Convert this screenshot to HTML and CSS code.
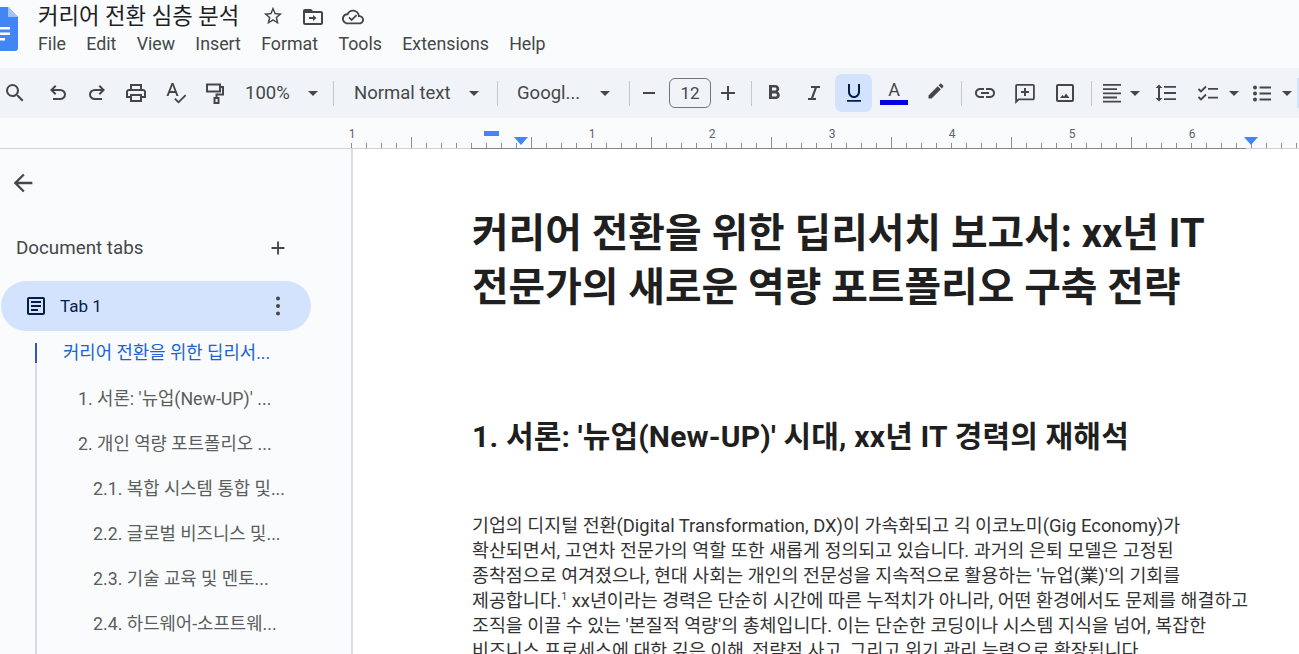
FILE: index.html
```html
<!DOCTYPE html>
<html lang="ko">
<head>
<meta charset="utf-8">
<title>커리어 전환 심층 분석</title>
<link rel="stylesheet" href="styles.css">
</head>
<body>
<header class="top">
  <svg class="logo" viewBox="0 0 32 44"><path fill="#4285f4" d="M3 0h19l10 10v31a3 3 0 0 1-3 3H3a3 3 0 0 1-3-3V3a3 3 0 0 1 3-3z"/><path fill="#a1c2fa" d="M22 0l10 10H22z"/><path fill="#fff" d="M8 20h16v2.400H8zM8 25.500h16v2.400H8zM8 31h11v2.400H8z"/></svg>
  <div class="top-main">
    <div class="title-row">
      <span class="doc-title">커리어 전환 심층 분석</span>
      <svg class="ti ti-star" viewBox="0 0 24 24"><path d="M22 9.240l-7.190-.62L12 2 9.190 8.630 2 9.240l5.460 4.730L5.820 21 12 17.270 18.180 21l-1.630-7.030L22 9.240zM12 15.400l-3.760 2.270 1-4.280-3.320-2.880 4.380-.38L12 6.100l1.710 4.040 4.380.38-3.320 2.880 1 4.280L12 15.400z"/></svg>
      <svg class="ti ti-folder" viewBox="0 0 24 24"><path d="M20 6h-8l-2-2H4c-1.100 0-2 .9-2 2v12c0 1.100.9 2 2 2h16c1.100 0 2-.9 2-2V8c0-1.100-.9-2-2-2zm0 12H4V8h16v10zM12 10l3.500 3-3.500 3v-2H8v-2h4z"/></svg>
      <svg class="ti ti-cloud" viewBox="0 0 24 24"><path d="M19.350 10.040C18.670 6.590 15.640 4 12 4 9.110 4 6.600 5.640 5.350 8.040 2.340 8.360 0 10.910 0 14c0 3.310 2.690 6 6 6h13c2.760 0 5-2.240 5-5 0-2.640-2.050-4.780-4.650-4.960zM19 18H6c-2.210 0-4-1.790-4-4s1.790-4 4-4h.71C7.370 7.690 9.480 6 12 6c3.040 0 5.500 2.460 5.500 5.500v.5H19c1.660 0 3 1.340 3 3s-1.340 3-3 3z"/><path d="M10.500 16.500L7 13l1.300-1.300 2.200 2.200 4.700-4.700 1.300 1.300z"/></svg>
    </div>
    <nav class="menu"><span>File</span><span>Edit</span><span>View</span><span>Insert</span><span>Format</span><span>Tools</span><span>Extensions</span><span>Help</span></nav>
  </div>
</header>

<div class="toolbar">
  <svg class="ic i-search" viewBox="0 0 24 24"><path d="M15.500 14h-.79l-.28-.27A6.471 6.471 0 0 0 16 9.500 6.500 6.500 0 1 0 9.500 16c1.610 0 3.090-.59 4.230-1.570l.27.28v.79l5 4.990L20.490 19l-4.990-5zm-6 0C7.010 14 5 11.990 5 9.500S7.010 5 9.500 5 14 7.010 14 9.500 11.990 14 9.500 14z"/></svg>
  <svg class="ic i-undo" viewBox="0 0 24 24"><path d="M7 19v-2h7.100q1.575 0 2.738-1T18 13.500 16.837 11 14.100 10H7.800l2.600 2.600L9 14 4 9l5-5 1.400 1.400L7.800 8h6.300q2.425 0 4.163 1.575T20 13.500t-1.737 3.925T14.100 19H7z"/></svg>
  <svg class="ic i-redo" viewBox="0 0 24 24"><path d="M17 19v-2H9.900q-1.575 0-2.738-1T6 13.500 7.163 11 9.900 10h6.300l-2.600 2.600L15 14l5-5-5-5-1.400 1.400L16.200 8H9.900q-2.425 0-4.163 1.575T4 13.500t1.737 3.925T9.900 19H17z"/></svg>
  <svg class="ic i-print" viewBox="0 0 24 24"><path d="M19 8h-1V3H6v5H5c-1.660 0-3 1.340-3 3v6h4v4h12v-4h4v-6c0-1.660-1.340-3-3-3zM8 5h8v3H8V5zm8 12v2H8v-4h8v2zm2-2v-2H6v2H4v-4c0-.55.45-1 1-1h14c.55 0 1 .45 1 1v4h-2z"/></svg>
  <svg class="ic i-spell" viewBox="0 0 24 24"><path d="M12.450 15h2.090L9.430 2H7.570L2.460 15h2.090l1.120-3h5.640l1.140 3zm-6.020-5L8.500 4.480 10.570 10H6.430zM21 13.500l-6.500 6.500-3-3-1.300 1.300 4.300 4.300 7.800-7.800z"/></svg>
  <svg class="ic i-paint" viewBox="0 0 24 24"><path fill="none" stroke="currentColor" stroke-width="2" d="M5 3.500h13v7H5zM18 6h3v7.500h-6.500V17M12.500 17h4v5h-4z"/></svg>
  <span class="tb-text t-zoom">100%</span><i class="caret c-zoom"></i>
  <i class="sep s1"></i>
  <span class="tb-text t-style">Normal text</span><i class="caret c-style"></i>
  <i class="sep s2"></i>
  <span class="tb-text t-font">Googl...</span><i class="caret c-font"></i>
  <i class="sep s3"></i>
  <svg class="ic i-minus" viewBox="0 0 24 24"><path d="M6 11h12v2H6z"/></svg>
  <span class="size-box">12</span>
  <svg class="ic i-plus" viewBox="0 0 24 24"><path d="M19 13h-6v6h-2v-6H5v-2h6V5h2v6h6z"/></svg>
  <i class="sep s4"></i>
  <svg class="ic i-bold" viewBox="0 0 24 24"><path d="M15.600 10.790c.97-.67 1.650-1.770 1.650-2.790 0-2.260-1.750-4-4-4H7v14h7.040c2.090 0 3.710-1.700 3.710-3.790 0-1.520-.86-2.820-2.150-3.420zM10 6.500h3c.83 0 1.500.67 1.500 1.500s-.67 1.500-1.500 1.500h-3v-3zm3.500 9H10v-3h3.500c.83 0 1.500.67 1.500 1.500s-.67 1.500-1.500 1.500z"/></svg>
  <svg class="ic i-italic" viewBox="0 0 24 24"><path d="M9 5v2h3.600L8.900 17H6v2h8v-2h-2.800l3.700-10H18V5z"/></svg>
  <span class="u-btn"><svg class="ic" viewBox="0 0 24 24"><path d="M12 17c3.310 0 6-2.690 6-6V3h-2v8c0 2.200-1.800 4-4 4s-4-1.800-4-4V3H6v8c0 3.310 2.690 6 6 6zm-7 2v1.800h14V19H5z"/></svg></span>
  <span class="color-btn"><span class="color-a">A</span><i class="color-bar"></i></span>
  <svg class="i-pen" viewBox="0 0 24 24"><path d="M3 17.250V21h3.750L17.810 9.940l-3.750-3.750L3 17.250zM20.710 7.040a.996.996 0 0 0 0-1.410l-2.340-2.340a.996.996 0 0 0-1.410 0l-1.830 1.830 3.750 3.750 1.830-1.830z"/></svg>
  <i class="sep s5"></i>
  <svg class="ic i-link" viewBox="0 0 24 24"><path d="M3.900 12c0-1.710 1.390-3.100 3.100-3.100h4V7H7c-2.760 0-5 2.240-5 5s2.240 5 5 5h4v-1.900H7c-1.710 0-3.100-1.390-3.100-3.100zM8 13h8v-2H8v2zm9-6h-4v1.900h4c1.710 0 3.100 1.390 3.100 3.100s-1.390 3.100-3.100 3.100h-4V17h4c2.760 0 5-2.240 5-5s-2.240-5-5-5z"/></svg>
  <svg class="ic i-comment" viewBox="0 0 24 24"><path d="M20 3H4c-1 0-1.800.8-1.800 1.800V23l3.800-3.800h14c1 0 1.800-.8 1.800-1.800V4.800C21.800 3.800 21 3 20 3zm0 14.400H5.200L4 18.600V4.800h16v12.600zM11 7h2v3h3v2h-3v3h-2v-3H8v-2h3z"/></svg>
  <svg class="ic i-image" viewBox="0 0 24 24"><path d="M5 3h14a2 2 0 0 1 2 2v14a2 2 0 0 1-2 2H5a2 2 0 0 1-2-2V5a2 2 0 0 1 2-2zm0 2v14h14V5H5zm2 12l2.500-3 1.500 1.500 2-3 3.500 4.500z"/></svg>
  <i class="sep s6"></i>
  <svg class="ic i-align" viewBox="0 0 24 24"><path d="M3 3h18v1.800H3zM3 7.200h14V9H3zM3 11.400h18v1.800H3zM3 15.600h14v1.800H3zM3 19.800h18v1.800H3z"/></svg><i class="caret c-align"></i>
  <svg class="ic i-line" viewBox="0 0 24 24"><path d="M6 7h2.500L5 3.500 1.500 7H4v10H1.500L5 20.500 8.500 17H6V7zm4-2v1.800h12V5H10zm0 14h12v-1.800H10V19zm0-6.100h12v-1.800H10v1.800z"/></svg>
  <svg class="ic i-check" viewBox="0 0 24 24"><path fill="none" stroke="currentColor" stroke-width="1.800" d="M2.500 8l2.500 2.500L10 5.500M2.500 16l2.500 2.500 5-5"/><path d="M12 7h10v1.800H12zM12 15.800h10v1.800H12z"/></svg><i class="caret c-check"></i>
  <svg class="ic i-list" viewBox="0 0 24 24"><circle cx="5" cy="6.500" r="2"/><circle cx="5" cy="12.500" r="2"/><circle cx="5" cy="18.500" r="2"/><path d="M9.500 5.600H21v1.800H9.500zM9.500 11.600H21v1.800H9.500zM9.500 17.600H21v1.800H9.500z"/></svg><i class="caret c-list"></i>
  <i class="edge"></i>
</div>

<div class="ruler">
  <div class="ruler-nums"><span>1</span><span></span><span>1</span><span>2</span><span>3</span><span>4</span><span>5</span><span>6</span></div>
  <i class="indent-bar"></i>
  <i class="tri tri-l"></i>
  <i class="tri tri-r"></i>
</div>

<div class="main">
  <aside class="side">
    <svg class="back" viewBox="0 0 24 24"><path d="M20 11H7.830l5.590-5.590L12 4l-8 8 8 8 1.410-1.410L7.830 13H20v-2z"/></svg>
    <div class="tabs-head"><span>Document tabs</span><svg class="add" viewBox="0 0 24 24"><path d="M19 13h-6v6h-2v-6H5v-2h6V5h2v6h6z"/></svg></div>
    <div class="tab-pill">
      <svg class="ic tab-ic" viewBox="0 0 24 24"><path d="M19 3H5c-1.100 0-2 .9-2 2v14c0 1.100.9 2 2 2h14c1.100 0 2-.9 2-2V5c0-1.100-.9-2-2-2zm0 16H5V5h14v14zM7 7h10v2H7zM7 11h10v2H7zM7 15h7v2H7z"/></svg>
      <span class="tab-name">Tab 1</span>
      <svg class="ic tab-more" viewBox="0 0 24 24"><circle cx="12" cy="4.500" r="2"/><circle cx="12" cy="12" r="2"/><circle cx="12" cy="19.500" r="2"/></svg>
    </div>
    <ul class="outline">
      <li class="active l0">커리어 전환을 위한 딥리서...</li>
      <li class="l1">1. 서론: '뉴업(New-UP)' ...</li>
      <li class="l1">2. 개인 역량 포트폴리오 ...</li>
      <li class="l2">2.1. 복합 시스템 통합 및...</li>
      <li class="l2">2.2. 글로벌 비즈니스 및...</li>
      <li class="l2">2.3. 기술 교육 및 멘토...</li>
      <li class="l2">2.4. 하드웨어-소프트웨...</li>
    </ul>
  </aside>
  <main class="doc">
    <h1>커리어 전환을 위한 딥리서치 보고서: xx년 IT<br>전문가의 새로운 역량 포트폴리오 구축 전략</h1>
    <h2>1. 서론: '뉴업(New-UP)' 시대, xx년 IT 경력의 재해석</h2>
    <p>기업의 디지털 전환(Digital Transformation, DX)이 가속화되고 긱 이코노미(Gig Economy)가<br>확산되면서, 고연차 전문가의 역할 또한 새롭게 정의되고 있습니다. 과거의 은퇴 모델은 고정된<br>종착점으로 여겨졌으나, 현대 사회는 개인의 전문성을 지속적으로 활용하는 '뉴업(業)'의 기회를<br>제공합니다.<sup>1</sup> xx년이라는 경력은 단순히 시간에 따른 누적치가 아니라, 어떤 환경에서도 문제를 해결하고<br>조직을 이끌 수 있는 '본질적 역량'의 총체입니다. 이는 단순한 코딩이나 시스템 지식을 넘어, 복잡한<br>비즈니스 프로세스에 대한 깊은 이해, 전략적 사고, 그리고 위기 관리 능력으로 확장됩니다.</p>
  </main>
</div>
</body>
</html>
```
FILE: styles.css
```css
* { box-sizing: border-box; }
html, body { margin: 0; height: 654px; overflow: hidden; }
body {
  width: 1299px;
  background: #f9fbfd;
  font-family: Roboto, "Noto Sans CJK KR", sans-serif;
  color: #444746;
  display: flex;
  flex-direction: column;
}
svg { display: block; fill: currentColor; flex: none; }

/* header */
.top { height: 68px; display: flex; flex: none; }
.logo { width: 32px; height: 44px; margin: 7px 20px 0 -14px; }
.top-main { display: flex; flex-direction: column; }
.title-row { height: 32px; display: flex; align-items: center; }
.doc-title { font-size: 22.300px; line-height: 28px; color: #1f1f1f; width: 224px; white-space: nowrap; }
.ti { margin-top: 2px; }
.ti-star { width: 22px; height: 22px; margin-top: 0; }
.ti-folder { width: 24px; height: 24px; margin-left: 17px; }
.ti-cloud { width: 22px; height: 22px; margin-left: 17px; }
.menu { display: flex; gap: 20.300px; font-size: 17.800px; line-height: 24px; color: #444746; }

/* toolbar */
.toolbar { height: 50px; flex: none; background: #f0f4f9; display: flex; align-items: center; color: #444746; }
.ic { width: 24px; height: 24px; }
.tb-text { font-size: 18.500px; line-height: 24px; white-space: nowrap; color: #444746; }
.caret { width: 0; height: 0; border-left: 5px solid transparent; border-right: 5px solid transparent; border-top: 5px solid #444746; flex: none; }
.sep { width: 1px; height: 25px; background: #c7c7c7; flex: none; }
.i-search { margin-left: 3px; }
.i-undo { margin-left: 18.500px; }
.i-redo { margin-left: 15.500px; }
.i-print { margin-left: 15px; }
.i-spell { margin-left: 16px; }
.i-paint { margin-left: 13.500px; }
.t-zoom { margin-left: 19.500px; width: 47px; }
.c-zoom { margin-left: 16px; }
.s1 { margin-left: 15px; }
.t-style { margin-left: 20px; width: 96px; }
.c-style { margin-left: 19px; }
.s2 { margin-left: 18px; }
.t-font { margin-left: 19px; width: 63px; }
.c-font { margin-left: 20px; }
.s3 { margin-left: 19px; }
.i-minus { margin-left: 7px; }
.size-box { margin-left: 8px; width: 42px; height: 30px; border: 1px solid #747775; border-radius: 6px; font-size: 17px; line-height: 28px; text-align: center; color: #444746; flex: none; }
.i-plus { margin-left: 5px; }
.s4 { margin-left: 11px; }
.i-bold { margin-left: 10px; }
.i-italic { margin-left: 15.500px; }
.u-btn { margin-left: 9.500px; width: 37px; height: 38px; background: #d3e3fd; border-radius: 7px; display: flex; align-items: center; justify-content: center; flex: none; color: #041e49; }
.color-btn { margin-left: 8px; width: 28px; height: 38px; display: flex; flex-direction: column; align-items: center; flex: none; }
.color-a { font-size: 18px; line-height: 20px; margin-top: 6px; color: #444746; }
.color-bar { width: 28px; height: 5px; background: #0000e6; flex: none; }
.i-pen { margin: 0 0 4px 18px; width: 20px; height: 20px; }
.s5 { margin-left: 15px; }
.i-link { margin-left: 11px; }
.i-comment { margin-left: 15.500px; }
.i-image { margin-left: 16px; }
.s6 { margin-left: 14.500px; }
.i-align { margin-left: 8px; }
.c-align { margin-left: 6px; }
.i-line { margin-left: 14px; }
.i-check { margin-left: 18px; }
.c-check { margin-left: 9px; }
.i-list { margin-left: 11px; }
.c-list { margin-left: 8px; }
.edge { margin-left: 5px; width: 2px; height: 30px; background: #d3e3fd; flex: none; }

/* ruler */
.ruler {
  height: 31px; flex: none; position: relative;
  border-bottom: 1px solid #80868b;
  border-image: linear-gradient(90deg, #d0d3d6 0 471px, #80868b 471px 1245px, #d0d3d6 1245px) 1;
  background-color: #f9fbfd;
  background-image:
    repeating-linear-gradient(90deg, #8e9193 0 1px, transparent 1px 120px),
    repeating-linear-gradient(90deg, #8e9193 0 1px, transparent 1px 15px);
  background-repeat: no-repeat;
  background-position: 411px 100%, 351px 100%;
  background-size: 888px 11px, 948px 5px;
}
.ruler-nums { display: flex; padding-left: 292px; padding-top: 9px; font-size: 12px; line-height: 14px; color: #5f6368; }
.ruler-nums span { width: 120px; flex: none; text-align: center; }
.indent-bar { position: absolute; left: 484px; top: 13px; width: 15px; height: 5px; background: #4285f4; }
.tri { position: absolute; top: 19px; width: 0; height: 0; border-left: 7px solid transparent; border-right: 7px solid transparent; border-top: 8px solid #4285f4; }
.tri-l { left: 514px; }
.tri-r { left: 1244px; }

/* main */
.main { flex: 1; display: flex; min-height: 0; }
.side { width: 353px; flex: none; border-right: 2px solid #dadce0; background: #f9fbfd; }
.back { width: 28px; height: 28px; margin: 20px 0 0 9px; color: #444746; }
.tabs-head { display: flex; justify-content: space-between; align-items: center; margin: 39px 0 0 16px; width: 272px; font-size: 18.800px; line-height: 24px; color: #444746; }
.add { width: 22px; height: 22px; margin-right: -1px; }
.tab-pill { margin: 21px 0 0 1px; width: 310px; height: 50px; border-radius: 25px; background: #d3e3fd; display: flex; align-items: center; color: #041e49; }
.tab-ic { margin-left: 23px; }
.tab-name { margin-left: 12px; font-size: 17px; flex: 1; }
.tab-more { margin-right: 21px; color: #444746; }
.outline { list-style: none; margin: 12px 0 0 35px; padding: 0; border-left: 2px solid #dadce0; height: 400px; }
.outline li { height: 45px; line-height: 19px; font-size: 17.800px; white-space: nowrap; color: #5a5e5c; }
.outline .active { color: #1a62d6; height: 45.500px; background: linear-gradient(#3457b8, #3457b8) 0 0 / 2px 20px no-repeat; margin-left: -2px; }
.l0 { padding-left: 28px; }
.l1 { padding-left: 41px; }
.l2 { padding-left: 56px; }

/* document */
.doc { flex: 1; background: #fff; padding: 58px 0 0 119px; color: #1f1f1f; overflow: hidden; }
h1 { margin: 0; font-size: 39.800px; line-height: 54px; font-weight: 700; white-space: nowrap; color: #1f1f1f; }
h2 { margin: 100px 0 0; font-size: 30px; letter-spacing: .17px; line-height: 44px; font-weight: 700; white-space: nowrap; color: #1f1f1f; }
p { margin: 54px 0 0; font-size: 18.400px; line-height: 25px; white-space: nowrap; color: #333; }
sup { font-size: 10px; line-height: 0; }
```
